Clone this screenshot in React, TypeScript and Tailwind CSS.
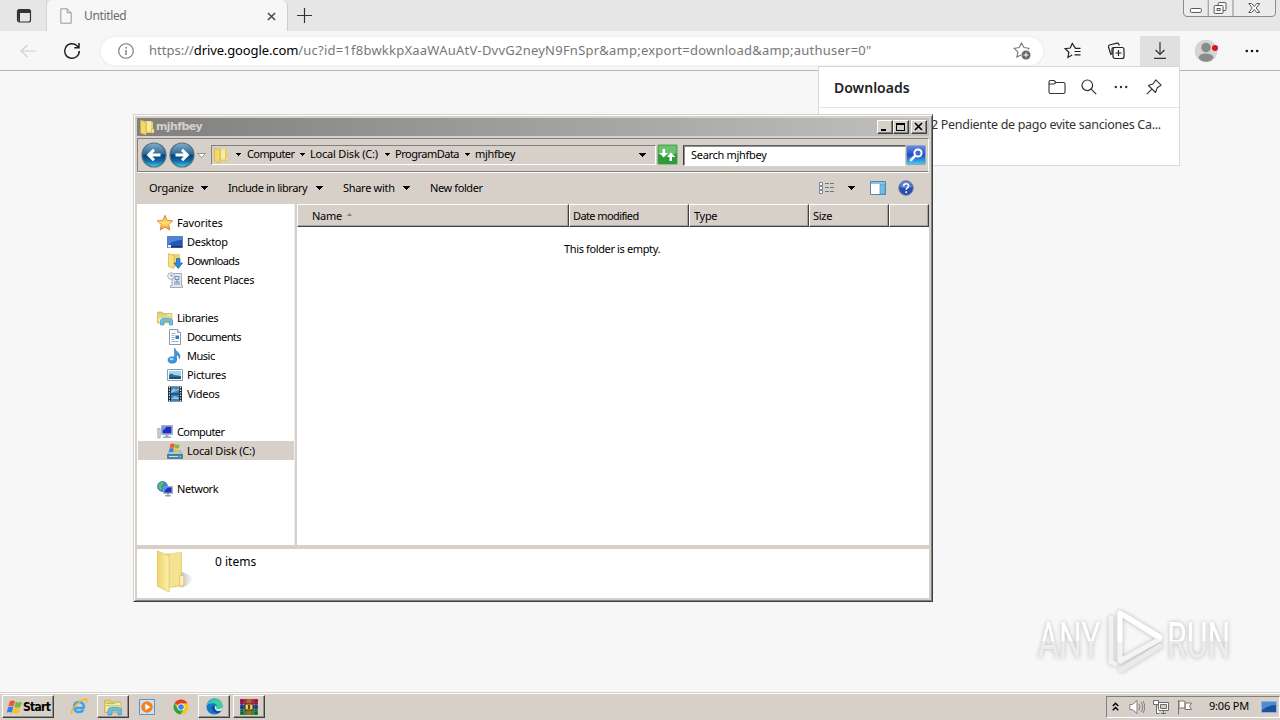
import type { ReactNode } from 'react';
import clsx from 'clsx';

type IconProps = { className?: string };

function Caret({ className }: IconProps) {
  return (
    <svg viewBox="0 0 7 4" className={clsx('h-1 w-[7px] shrink-0', className)} shapeRendering="crispEdges">
      <path d="M0 0h7L3.5 4z" fill="#000" />
    </svg>
  );
}

function SmallCaret({ className }: IconProps) {
  return (
    <svg viewBox="0 0 5 3" className={clsx('h-[3px] w-[5px] shrink-0', className)} shapeRendering="crispEdges">
      <path d="M0 0h5L2.5 3z" fill="#000" />
    </svg>
  );
}

function FolderIcon({ className = 'size-4' }: IconProps) {
  return (
    <svg viewBox="0 0 16 16" className={clsx('shrink-0', className)}>
      <path d="M6 2h6l2 1v11H6z" fill="#e9cf62" />
      <path d="M8 2.5h4v10H8z" fill="#f7eaa6" />
      <path d="M1.500 1l5.500 2v13l-5.500-2z" fill="#f5d968" stroke="#cfa936" strokeWidth=".6" />
      <path d="M13 10h2v4h-2z" fill="#fff6b8" stroke="#c9a73b" strokeWidth=".5" />
    </svg>
  );
}

function StarIcon() {
  return (
    <svg viewBox="0 0 16 16" className="size-4 shrink-0">
      <defs>
        <linearGradient id="star" x1="0" y1="0" x2="0" y2="1">
          <stop offset="0" stopColor="#ffab3d" />
          <stop offset=".55" stopColor="#ffe173" />
          <stop offset="1" stopColor="#f08a24" />
        </linearGradient>
      </defs>
      <path d="M8 .3l2.200 5 5.600.5-4.200 3.700 1.300 5.600L8 12.200l-4.900 2.900 1.300-5.600L.2 5.800l5.600-.5z" fill="url(#star)" stroke="#e07b1a" strokeWidth=".8" />
    </svg>
  );
}

function DesktopIcon() {
  return (
    <svg viewBox="0 0 16 16" className="size-4 shrink-0">
      <path d="M.5 2.500h15v11H.5z" fill="#2456b4" stroke="#5f7fae" />
      <path d="M1 3h14v3Q7 6 1 11z" fill="#4d86d6" />
      <path d="M1 12h14v1.500H1z" fill="#17306c" />
      <path d="M1 11h3v2.500H1z" fill="#e8f0ff" />
    </svg>
  );
}

function DownloadsIcon() {
  return (
    <svg viewBox="0 0 16 16" className="size-4 shrink-0">
      <path d="M5 1h8v13H5z" fill="#ecd469" />
      <path d="M1.500.5L7 2.500v13l-5.500-2z" fill="#f8e07a" stroke="#cda93a" strokeWidth=".6" />
      <path d="M9.500 5.500h3.500V10h2.500l-4.200 5.500L7 10h2.500z" fill="#2c8be0" stroke="#165fa9" strokeWidth=".7" />
    </svg>
  );
}

function RecentIcon() {
  return (
    <svg viewBox="0 0 16 16" className="size-4 shrink-0">
      <path d="M5 1.500h9.500v12h1v2h-12v-2H5z" fill="#e3e9ef" stroke="#8c98a6" strokeWidth=".8" />
      <path d="M8 4.500h4v3H8zM7 10h6M7 12h6M10 7.500v3" fill="none" stroke="#5f86b4" strokeWidth=".9" />
      <circle cx="4" cy="4" r="3.300" fill="#f4f7fa" stroke="#8f9baa" strokeWidth=".8" />
      <path d="M4 2v2.200h1.700" fill="none" stroke="#607083" strokeWidth=".8" />
    </svg>
  );
}

function LibrariesIcon({ className = 'size-4' }: IconProps) {
  return (
    <svg viewBox="0 0 16 16" className={clsx('shrink-0', className)}>
      <path d="M.5 2h5l1 1.500H15V13H.5z" fill="#edcf61" stroke="#cba83c" strokeWidth=".6" />
      <path d="M1.500 4.500h13V12h-13z" fill="#faeda8" />
      <path d="M2 5h8M2 7h12" stroke="#8fc06b" strokeWidth=".8" />
      <path d="M3.500 15V11q0-2.500 3-2.500h6q3 0 3 2.500v4h-3v-3.500H7V15z" fill="#72bde4" stroke="#3e8fbd" strokeWidth=".6" />
    </svg>
  );
}

function DocumentsIcon() {
  return (
    <svg viewBox="0 0 16 16" className="size-4 shrink-0">
      <path d="M2.500.5h8l3 3v12h-11z" fill="#fbfcfe" stroke="#7d8ea3" strokeWidth=".9" />
      <path d="M10.500.5v3h3" fill="#d7e0ea" stroke="#7d8ea3" strokeWidth=".8" />
      <path d="M4.500 4.500h4M4.500 6.500h3M4.500 8.500h3M4.500 10.500h3M4.500 12.500h7" stroke="#8a9bb2" strokeWidth=".8" />
      <path d="M8.500 6.500H12V10H8.500z" fill="#2f78bd" />
    </svg>
  );
}

function MusicIcon() {
  return (
    <svg viewBox="0 0 16 16" className="size-4 shrink-0">
      <path d="M7.500 0q1 2.500 3.500 4.500 3 2.500 1.500 6.500-.3-3.500-3-4.500v5.500h-2z" fill="#3c9be0" stroke="#1f6fb8" strokeWidth=".5" />
      <ellipse cx="5.300" cy="12" rx="4.300" ry="3.200" fill="#3596df" stroke="#1f6fb8" strokeWidth=".5" />
      <ellipse cx="4.600" cy="11" rx="2" ry="1.200" fill="#a6d6f7" />
    </svg>
  );
}

function PicturesIcon() {
  return (
    <svg viewBox="0 0 16 16" className="size-4 shrink-0">
      <path d="M.5 2.500h15v11H.5z" fill="#fff" stroke="#7fa3b5" />
      <path d="M2 4h12v8H2z" fill="#9fd7f0" />
      <path d="M2 8q2-3 5 0l7 1v3H2z" fill="#2a6f8c" />
      <path d="M2 10.500q6-1 12 0V12H2z" fill="#1b4c78" />
    </svg>
  );
}

function VideosIcon() {
  return (
    <svg viewBox="0 0 16 16" className="size-4 shrink-0">
      <path d="M1 .5h14v15H1z" fill="#1c2a3a" />
      <path d="M4 1h8v6.500H4zM4 8.500h8V15H4z" fill="#3c82bd" />
      <path d="M4 5l3-3 2 2 3-2v2L4 7zM4 13l4-3 4 2v1H4z" fill="#8ac4e8" />
      <path d="M2.500 1v14M13.500 1v14" stroke="#dfe7ee" strokeWidth="1.200" strokeDasharray="1.300 1.300" />
    </svg>
  );
}

function ComputerIcon() {
  return (
    <svg viewBox="0 0 16 16" className="size-4 shrink-0">
      <path d="M.8 4.500h2.400v9.500H.8z" fill="#d3d8de" stroke="#808a96" strokeWidth=".6" />
      <path d="M4.500 1.500h11v9h-11z" fill="#d9dde3" stroke="#8a93a0" strokeWidth=".7" />
      <path d="M5.500 2.500h9v7h-9z" fill="#1c2fc0" />
      <path d="M5.500 2.500h4q-1 3-4 4z" fill="#7b90f0" />
      <path d="M8.500 10.500h3v2H14v1.500H6v-1.500h2.500z" fill="#a1a9b4" />
    </svg>
  );
}

function DiskIcon() {
  return (
    <svg viewBox="0 0 16 16" className="size-4 shrink-0">
      <path d="M2.500 8h11l2 3.500H.5z" fill="#aacbdc" stroke="#5f8ba5" strokeWidth=".5" />
      <path d="M.5 11.500h15v4H.5z" fill="#3f87ad" stroke="#2e6484" strokeWidth=".6" />
      <path d="M2 13.500h9" stroke="#bfe0ee" />
      <path d="M12.500 13H14v1.200h-1.500z" fill="#7de35a" />
      <path d="M3.500 1q2.300-1.200 4.200 0l-.8 4Q5 4 2.700 5z" fill="#ee5a2a" />
      <path d="M8.300 1.300q2.300 1 4.400 0L11.900 5q-2.200.8-4.300 0z" fill="#7cbb3c" />
      <path d="M2.600 5.500q2.300-1 4.100 0L6 9.200q-2-.8-4.200 0z" fill="#3f7fd8" />
      <path d="M7.400 5.700q2.200 1 4.300 0l-.9 3.700q-2.100.8-4.100 0z" fill="#f5c22c" />
    </svg>
  );
}

function NetworkIcon() {
  return (
    <svg viewBox="0 0 16 16" className="size-4 shrink-0">
      <circle cx="5.500" cy="5.500" r="5" fill="#2f86d8" stroke="#2564a8" strokeWidth=".6" />
      <path d="M2 3q3-3 5-1.500L6 4 4 5l1 3-2 1Q.5 6 2 3z" fill="#5fc15b" />
      <path d="M6.500 5.500h9v7h-9z" fill="#dbe0e6" stroke="#7c8796" strokeWidth=".6" />
      <path d="M7.300 6.300h7.400v5.400H7.300z" fill="#1b33c4" />
      <path d="M7.300 6.300H11L7.300 10z" fill="#6f8bf0" />
      <path d="M10 12.500h2v1.500h2v1.500H8V14h2z" fill="#9aa4b1" />
    </svg>
  );
}

function NavArrow({ flip, className }: { flip?: boolean; className?: string }) {
  return (
    <svg viewBox="0 0 26 26" className={clsx('size-[26px] shrink-0', flip && '-scale-x-100', className)}>
      <defs>
        <linearGradient id="orb" x1="0" y1="0" x2="0" y2="1">
          <stop offset="0" stopColor="#86aec8" />
          <stop offset=".46" stopColor="#2a6b9b" />
          <stop offset=".5" stopColor="#08406f" />
          <stop offset=".75" stopColor="#0f6ba6" />
          <stop offset="1" stopColor="#49cdf5" />
        </linearGradient>
      </defs>
      <circle cx="13" cy="13" r="12" fill="url(#orb)" stroke="#50718a" strokeWidth="1.200" />
      <path d="M19.500 13H8.500M13 7.800L7.800 13l5.200 5.200" fill="none" stroke="#fff" strokeWidth="3" />
    </svg>
  );
}

type NavItem = { label: string; icon: ReactNode; root?: boolean; active?: boolean; tracking?: string };

const sidebar: (NavItem | null)[] = [
  { label: 'Favorites', icon: <StarIcon />, root: true, tracking: 'tracking-[-0.15px]' },
  { label: 'Desktop', icon: <DesktopIcon /> },
  { label: 'Downloads', icon: <DownloadsIcon />, tracking: 'tracking-[-0.6px]' },
  { label: 'Recent Places', icon: <RecentIcon />, tracking: 'tracking-[-0.25px]' },
  null,
  { label: 'Libraries', icon: <LibrariesIcon />, root: true, tracking: 'tracking-[-0.4px]' },
  { label: 'Documents', icon: <DocumentsIcon />, tracking: 'tracking-[-0.6px]' },
  { label: 'Music', icon: <MusicIcon />, tracking: 'tracking-[-0.5px]' },
  { label: 'Pictures', icon: <PicturesIcon /> },
  { label: 'Videos', icon: <VideosIcon /> },
  null,
  { label: 'Computer', icon: <ComputerIcon />, root: true, tracking: 'tracking-[-0.6px]' },
  { label: 'Local Disk (C:)', icon: <DiskIcon />, active: true, tracking: 'tracking-[-0.2px]' },
  null,
  { label: 'Network', icon: <NetworkIcon />, root: true, tracking: 'tracking-[-0.45px]' }
];

const crumbs = [
  { label: 'Computer', width: 'w-[53px] tracking-[-0.6px]' },
  { label: 'Local Disk (C:)', width: 'w-[75px] tracking-[-0.2px]' },
  { label: 'ProgramData', width: 'w-[70px] tracking-[-0.5px]' }
];

const commands = [
  { label: 'Organize', text: 'w-[52px]', cell: 'w-[79px]' },
  { label: 'Include in library', text: 'w-[88px] tracking-[-0.42px]', cell: 'w-[115px]' },
  { label: 'Share with', text: 'w-[60px]', cell: 'w-[87px]' }
];

const columns = [
  { label: 'Name', cell: 'w-[272px] pl-[14px]', sorted: true },
  { label: 'Date modified', cell: 'w-[120px] pl-[3px] tracking-[-0.6px]' },
  { label: 'Type', cell: 'w-[120px] pl-[4px]' },
  { label: 'Size', cell: 'w-[80px] pl-[3px]' },
  { label: '', cell: 'w-[40px]' }
];

function BrowserTabs() {
  return (
    <div className="flex h-[31px] bg-[#e6e6e6]">
      <div className="flex w-[47px] items-center border-r border-[#d4d4d4] pl-4">
        <svg viewBox="0 0 16 16" className="size-4">
          <rect x="1.500" y="1.500" width="13" height="12.500" rx="2" fill="none" stroke="#333" strokeWidth="1.200" />
          <path d="M1.500 2.500q0-1 1.500-1h10q1.500 0 1.500 1V5h-13zM1.500 5H4v9H2.500z" fill="#333" />
        </svg>
      </div>
      <div className="flex w-[241px] items-center rounded-t-md border-r border-[#cdcdcd] bg-[#f7f7f7] pl-3">
        <svg viewBox="0 0 12 16" className="h-4 w-[14px]" fill="none" stroke="#999">
          <path d="M.8.8h6.400l4 4v10.400H.8zM7.200.8v4h4" />
        </svg>
        <span className="ml-[11px] w-[183px] text-[12px] tracking-[-0.35px] text-[#6b6b6b]">Untitled</span>
        <svg viewBox="0 0 10 10" className="mt-px size-[9px]" stroke="#444" strokeWidth="1.600">
          <path d="M1 1l8 8M9 1L1 9" />
        </svg>
      </div>
      <svg viewBox="0 0 14 14" className="mt-[8px] ml-[9px] size-[15px]" stroke="#333" strokeWidth="1.100">
        <path d="M7 0v14M0 7h14" />
      </svg>
      <div className="mt-[-1px] mr-1 ml-auto flex h-[18px] w-[93px] rounded-b border border-[#8c8c8c] bg-[#ececec]">
        <svg viewBox="0 0 92 16" className="h-4 w-[92px]" fill="none" stroke="#555">
          <path d="M24.500 0v16M49.500 0v16" stroke="#8c8c8c" />
          <rect x="6.500" y="8.500" width="11" height="4" rx="1" fill="#fff" />
          <rect x="34.500" y="2.500" width="8" height="8" rx="1" fill="#fff" />
          <rect x="30.500" y="5.500" width="9" height="8" rx="1" fill="#fff" />
          <rect x="33.500" y="8.500" width="3" height="2" />
          <path d="M65.500 3.500h3l2.500 3 2.500-3h3L73 8l3.500 4.500h-3l-2.500-3-2.500 3h-3L69 8z" fill="#fff" />
        </svg>
      </div>
    </div>
  );
}

function BrowserToolbar() {
  return (
    <div className="flex h-10 items-center border-b border-[#b5b5b5] bg-[#f7f7f7] pl-5">
      <svg viewBox="0 0 16 14" className="h-[14px] w-4" fill="none" stroke="#cfcfcf" strokeWidth="1.200">
        <path d="M16 7H1M7.500 1L1 7l6.500 6" />
      </svg>
      <svg viewBox="0 0 18 18" className="ml-[27px] size-[18px]" fill="none" stroke="#222" strokeWidth="1.500">
        <path d="M16.300 9A7.300 7.300 0 1 1 14 3.700L15.800 5.500M16 1v4.700h-4.700" />
      </svg>
      <div className="ml-[18px] flex h-[32px] w-[946px] shrink-0 items-center rounded-full border-2 border-[#f1f1f1] bg-white pl-[17px]">
        <svg viewBox="0 0 16 16" className="size-4 shrink-0" fill="none" stroke="#777" strokeWidth="1.100">
          <circle cx="8" cy="8" r="7.300" />
          <path d="M8 7v5M8 4v1.500" strokeWidth="1.400" />
        </svg>
        <span className="mt-px ml-[15px] w-[860px] text-[13px] tracking-[0.235px] whitespace-nowrap text-[#777]">
          <span className="tracking-normal">https://</span>
          <span className="tracking-[-0.12px] text-black">drive.google.com</span>
          /uc?id=1f8bwkkpXaaWAuAtV-DvvG2neyN9FnSpr&amp;amp;export=download&amp;amp;authuser=0"
        </span>
        <svg viewBox="0 0 18 18" className="ml-auto mr-[12px] size-[18px] shrink-0" fill="none" stroke="#777">
          <path d="M15 7.500l1-1.200-5-.7L8.500 1 6.200 5.600l-5 .7 3.700 3.600-1 5 4-2" strokeWidth="1.100" />
          <circle cx="13" cy="13" r="4.500" fill="#666" stroke="none" />
          <path d="M13 10.500v5M10.500 13h5" stroke="#fff" />
        </svg>
      </div>
      <svg viewBox="0 0 18 18" className="ml-[19px] size-[18px] shrink-0" fill="none" stroke="#222" strokeWidth="1.200">
        <path d="M16.500 6.300h-5L8.300 1.500 6.200 6l-5 .7 3.700 3.500-1 5.200 4.300-2.400M10.500 9.500h6M10.500 12.800h6" />
      </svg>
      <svg viewBox="0 0 18 18" className="ml-[25px] size-[18px] shrink-0" fill="none" stroke="#222" strokeWidth="1.200">
        <path d="M4 13L1.500 5q-.4-1.500 1-2L10 1.200q1.300-.3 1.800 1l.4 1.300M5 12.500V7q0-1.500 1.500-1.500H9" />
        <rect x="6" y="5.500" width="11" height="11" rx="2" />
        <path d="M11.500 8v6M8.500 11h6" />
      </svg>
      <div className="mt-px ml-[15px] flex h-[31px] w-10 shrink-0 items-center justify-center bg-[#e0e0e0]">
        <svg viewBox="0 0 14 18" className="h-[18px] w-[14px]" fill="none" stroke="#333" strokeWidth="1.200">
          <path d="M7 0v12.500M2.500 8L7 12.500 11.500 8M1 16.400h12" />
        </svg>
      </div>
      <svg viewBox="0 0 24 24" className="ml-[14px] size-6 shrink-0">
        <circle cx="12" cy="12" r="11.300" fill="#d4d4d4" />
        <circle cx="12" cy="8.500" r="4.800" fill="#8b8b8b" />
        <path d="M4.500 18.500q1-4 7.500-4t7.500 4Q17 22.800 12 22.800t-7.500-4.300z" fill="#8b8b8b" />
        <circle cx="21" cy="9" r="3" fill="#e3101d" />
      </svg>
      <svg viewBox="0 0 14 4" className="ml-[27px] h-1 w-[14px] shrink-0" fill="#111">
        <circle cx="1.800" cy="2" r="1.300" />
        <circle cx="7" cy="2" r="1.300" />
        <circle cx="12.200" cy="2" r="1.300" />
      </svg>
    </div>
  );
}

function DownloadsFlyout() {
  return (
    <div className="absolute top-[66px] left-[818px] h-[100px] w-[362px] border border-[#d8d8d8] bg-white">
      <div className="flex h-[41px] items-center border-b border-[#e4e4e4] pl-[15px]">
        <span className="w-[214px] text-[14px] font-semibold text-[#222]">Downloads</span>
        <svg viewBox="0 0 18 16" className="h-4 w-[18px]" fill="none" stroke="#333" strokeWidth="1.100">
          <path d="M1 4.500V3q0-1.500 1.500-1.500H6l2 2h7.500Q17 3.500 17 5v8q0 1.500-1.500 1.500h-13Q1 14.500 1 13V5h5l2-1.500" />
        </svg>
        <svg viewBox="0 0 16 16" className="ml-[15px] size-4" fill="none" stroke="#333" strokeWidth="1.200">
          <circle cx="6.300" cy="6.300" r="5.300" />
          <path d="M10.200 10.200l5 5" />
        </svg>
        <svg viewBox="0 0 14 4" className="ml-[17px] h-1 w-[14px]" fill="#333">
          <circle cx="1.800" cy="2" r="1.200" />
          <circle cx="7" cy="2" r="1.200" />
          <circle cx="12.200" cy="2" r="1.200" />
        </svg>
        <svg viewBox="0 0 16 16" className="ml-[18px] size-4" fill="none" stroke="#333" strokeWidth="1.100">
          <path d="M9.800.9l5.300 5.300-3.900 2.600-1.700 4.700-7-7 4.700-1.700zM5.700 10.300L.8 15.200" strokeLinejoin="round" />
        </svg>
      </div>
      <div className="flex justify-end pt-[7px] pr-[18px] text-[12.5px] leading-5 tracking-[-0.3px] text-[#333]">
        <span className="w-[230px] whitespace-nowrap">2 Pendiente de pago evite sanciones Ca...</span>
      </div>
    </div>
  );
}

function TitleButton({ children, className }: { children: ReactNode; className?: string }) {
  return (
    <div
      className={clsx(
        'flex h-[14px] w-4 items-center justify-center border border-t-white border-r-[#404040] border-b-[#404040] border-l-white bg-[#d6d0c8] shadow-[inset_-1px_-1px_0_#808080]',
        className
      )}
    >
      <svg viewBox="0 0 10 10" className="size-[10px]" fill="none" stroke="#000" shapeRendering="crispEdges">
        {children}
      </svg>
    </div>
  );
}

function AddressRow() {
  return (
    <div className="mt-[2px] flex h-[34px] items-center border border-t-[#808080] border-r-white border-b-[#808080] border-l-[#808080] pl-[3px] shadow-[0_1px_0_#fff]">
      <NavArrow />
      <NavArrow flip className="ml-[2px]" />
      <svg viewBox="0 0 9 5" className="ml-[2px] h-[5px] w-[9px] shrink-0">
        <path d="M.5.5h8l-4 4z" fill="#fff" stroke="#808080" strokeWidth=".8" />
      </svg>
      <div className="-mt-px ml-[5px] flex h-5 w-[445px] shrink-0 items-center border border-t-[#808080] border-r-white border-b-white border-l-[#808080] pl-px">
        <FolderIcon />
        <SmallCaret className="ml-[7px]" />
        <div className="ml-[6px] flex w-[402px] items-center">
          {crumbs.map((crumb) => (
            <div key={crumb.label} className="flex items-center">
              <span className={clsx('whitespace-nowrap', crumb.width)}>{crumb.label}</span>
              <SmallCaret className="mr-[5px]" />
            </div>
          ))}
          <span>mjhfbey</span>
        </div>
        <Caret className="-ml-[10px]" />
      </div>
      <svg viewBox="0 0 22 22" className="ml-px size-[22px] shrink-0">
        <rect x=".5" y=".5" width="20" height="20" rx="1.500" fill="#2f9b38" stroke="#9ab89b" />
        <path d="M1.500 1.500h18v8q-9 2-18 1z" fill="#6cc36f" />
        <path d="M5.500 5h2.500v4h3l-4.300 4.500L2.500 9h3zM12.500 17v-4H9.800L14 8.500l4.500 4.500H15v4z" fill="#fff" />
      </svg>
      <div className="ml-1 flex h-[21px] w-[223px] shrink-0 items-center border border-t-[#606060] border-r-[#d6d0c8] border-b-white border-l-[#404040] bg-white pl-[7px] shadow-[inset_1px_1px_0_#909090]">
        Search mjhfbey
      </div>
      <svg viewBox="0 0 20 20" className="size-5 shrink-0">
        <defs>
          <linearGradient id="find" x1="0" y1="0" x2="0" y2="1">
            <stop offset="0" stopColor="#6e90e4" />
            <stop offset=".5" stopColor="#1f4ac4" />
            <stop offset="1" stopColor="#45d0f4" />
          </linearGradient>
        </defs>
        <rect x=".5" y=".5" width="19" height="19" rx="1" fill="url(#find)" stroke="#8fa8bf" />
        <circle cx="12" cy="8" r="3.600" fill="#3e6ad2" stroke="#fff" strokeWidth="2" />
        <path d="M9.300 10.700L5 15" stroke="#fff" strokeWidth="2.600" strokeLinecap="round" />
      </svg>
    </div>
  );
}

function CommandBar() {
  return (
    <div className="flex h-8 items-center pl-3">
      {commands.map((command) => (
        <div key={command.label} className={clsx('flex items-center', command.cell)}>
          <span className={clsx('whitespace-nowrap', command.text)}>{command.label}</span>
          <Caret />
        </div>
      ))}
      <span className="w-[389px] tracking-[-0.4px]">New folder</span>
      <svg viewBox="0 0 16 14" className="h-[14px] w-4 shrink-0" fill="none" stroke="#7385a3">
        <path d="M.5 1.500h3v3h-3zM.5 5.500h3v3h-3zM.5 9.500h3v3h-3z" fill="#fff" />
        <path d="M6 2.500h9M6 6.500h9M6 10.500h9" stroke="#6c7686" strokeDasharray="4 1" />
      </svg>
      <Caret className="ml-[13px]" />
      <svg viewBox="0 0 16 14" className="ml-[15px] h-[14px] w-4 shrink-0">
        <path d="M.5.5h15v13H.5z" fill="#fff" stroke="#5685ac" />
        <path d="M1 1h14v2H1z" fill="#8fc0e0" />
        <path d="M10 3.500h5V13h-5z" fill="#71bde0" stroke="#4c93bd" strokeWidth=".7" />
      </svg>
      <svg viewBox="0 0 16 16" className="ml-3 size-4 shrink-0">
        <circle cx="8" cy="8" r="7.400" fill="#2c4fae" stroke="#8793b5" />
        <path d="M2 7a6 6 0 0 1 12 0q-6 2-12 0z" fill="#5f82d4" />
        <path d="M5.600 6.300q0-2.600 2.500-2.600t2.400 2.200q0 1.200-1.200 1.900Q8.200 8.500 8.200 9.800M8.200 11.300v1.600" fill="none" stroke="#fff" strokeWidth="1.600" />
      </svg>
    </div>
  );
}

function ExplorerWindow() {
  return (
    <div className="absolute top-[114px] left-[133px] flex h-[488px] w-[800px] flex-col border border-t-[#d6d0c8] border-r-[#404040] border-b-[#404040] border-l-[#d6d0c8] bg-[#d6d0c8] p-[3px] text-[11px] tracking-[-0.3px] text-black shadow-[inset_1px_1px_0_#fff,inset_-1px_-1px_0_#808080]">
      <div className="flex h-[18px] items-center bg-linear-to-r from-[#808080] to-[#c0c0c0] pr-[2px] pl-[2px]">
        <FolderIcon />
        <span className="mt-px ml-px font-['DejaVu_Sans',sans-serif] text-[11px] font-bold tracking-[-0.6px] text-[#d6d0c8]">mjhfbey</span>
        <TitleButton className="ml-auto">
          <path d="M1 7h5v2H1z" fill="#000" stroke="none" />
        </TitleButton>
        <TitleButton>
          <path d="M.5 1h8v7.500h-8zM.5 2h8" />
        </TitleButton>
        <TitleButton className="ml-[2px]">
          <path d="M1 1l7 7M8 1L1 8" strokeWidth="1.600" shapeRendering="auto" />
        </TitleButton>
      </div>
      <AddressRow />
      <CommandBar />

      <div className="flex h-[341px]">
        <div className="w-[158px] border-r border-[#eee] bg-white pt-[9px] pl-px">
          {sidebar.map((item, i) =>
            item ? (
              <div
                key={item.label}
                className={clsx('flex h-[19px] items-center gap-1', item.root ? 'pl-[19px]' : 'pl-[29px]', item.active && 'bg-[#d6d0c8]')}
              >
                {item.icon}
                <span className={clsx('mt-[2px] whitespace-nowrap', item.tracking)}>{item.label}</span>
              </div>
            ) : (
              <div key={i} className="h-[19px]" />
            )
          )}
        </div>
        <div className="ml-[2px] flex-1 bg-white">
          <div className="flex h-[23px]">
            {columns.map((column) => (
              <div
                key={column.cell}
                className={clsx(
                  'flex items-center border border-t-white border-r-[#404040] border-b-[#404040] border-l-white bg-[#d6d0c8] pt-[2px] shadow-[inset_-1px_-1px_0_#a8a49c]',
                  column.cell
                )}
              >
                {column.label}
                {column.sorted && (
                  <svg viewBox="0 0 5 3" className="mb-[4px] ml-[5px] h-[3px] w-[5px]">
                    <path d="M0 3h5L2.500 0z" fill="#85817b" />
                  </svg>
                )}
              </div>
            ))}
          </div>
          <p className="pt-[14px] pl-[267px] tracking-[-0.37px]">This folder is empty.</p>
        </div>
      </div>

      <div className="mt-1 flex h-[49px] bg-white">
        <svg viewBox="0 0 40 44" className="mt-[1px] ml-[18px] h-[43px] w-10">
          <defs>
            <linearGradient id="flap" x1="0" x2="1">
              <stop offset="0" stopColor="#efd56d" />
              <stop offset="1" stopColor="#fbf0ad" />
            </linearGradient>
            <linearGradient id="shade" x1="0" x2="1">
              <stop offset="0" stopColor="#c4c4c4" />
              <stop offset="1" stopColor="#fff" />
            </linearGradient>
          </defs>
          <path d="M26 22q8 2 13 7-4 7-12 10z" fill="url(#shade)" />
          <path d="M10 4l17-2v35l-15 2z" fill="#e8cc62" />
          <path d="M14 4l12-1.500v33L14 38z" fill="#f4e393" />
          <path d="M2 1l12 5v37L2 37z" fill="url(#flap)" stroke="#ddbf57" strokeWidth=".7" />
          <path d="M25 26h4v9l-4 3z" fill="#fff4bd" stroke="#d0b14b" strokeWidth=".6" />
        </svg>
        <span className="mt-1 ml-[20px] text-[12px] tracking-normal">0 items</span>
      </div>
    </div>
  );
}

function WatermarkWord({ children }: { children: string }) {
  return (
    <div className="w-[66px] shrink-0">
      <span className="inline-block origin-left scale-x-[.64] bg-linear-to-b from-white from-50% to-[#ececec] to-50% bg-clip-text text-transparent">
        {children}
      </span>
    </div>
  );
}

function Watermark() {
  return (
    <div className="absolute top-[606px] left-[1038px] flex h-[70px] w-[200px] items-center font-['Roboto',sans-serif] text-[50px] leading-[70px] drop-shadow-[0_0_2px_#b8b8b8]">
      <WatermarkWord>ANY</WatermarkWord>
      <svg viewBox="0 0 60 66" className="h-[66px] w-[60px] shrink-0" fill="none" strokeLinejoin="round" strokeLinecap="round" strokeWidth="5">
        <path d="M7 10v44l4 2" stroke="#f1f1f1" />
        <path d="M17 62l39-24" stroke="#eaeaea" />
        <path d="M16 5v48l40-22z" stroke="#f4f4f4" />
        <path d="M16 32V5l40 24" stroke="#fff" />
      </svg>
      <div className="ml-[3px]">
        <WatermarkWord>RUN</WatermarkWord>
      </div>
    </div>
  );
}

function TaskButton({ children, className }: { children: ReactNode; className?: string }) {
  return (
    <div
      className={clsx(
        'flex h-[23px] w-8 shrink-0 items-center justify-center border border-t-white border-r-[#404040] border-b-[#404040] border-l-white shadow-[inset_-1px_-1px_0_#909090]',
        className
      )}
    >
      {children}
    </div>
  );
}

function Taskbar() {
  return (
    <div className="flex h-7 items-center border-t border-[#d6d0c8] bg-[#d6d0c8] pl-[2px] text-[11px] text-black shadow-[inset_0_1px_0_#fff]">
      <TaskButton className="w-[52px]">
        <svg viewBox="0 0 18 16" className="h-4 w-[17px] shrink-0">
          <path d="M4 2q3-2 5.500 0L8 7.500Q5 6 2.500 7.500z" fill="#ee5b2b" />
          <path d="M10.300 2.500q3 1.500 6.500 0L15.300 8q-3 1.500-6.300 0z" fill="#7bb83a" />
          <path d="M2.200 8.300q3-1.500 5.500 0L6.200 14q-3-1.500-5.500 0z" fill="#3c7fd9" />
          <path d="M8.600 8.800q3 1.500 6.400 0l-1.500 5.500q-3 1.500-6.400 0z" fill="#f6c22a" />
        </svg>
        <span className="font-['DejaVu_Sans_Condensed','DejaVu_Sans',sans-serif] text-[12px] font-bold tracking-[-0.7px]">Start</span>
      </TaskButton>
      <svg viewBox="0 0 18 18" className="ml-[16px] size-[18px]" fill="none">
        <path d="M14.700 10H4.300Q4.500 14 9 14q3 0 4.300-2" stroke="#3aa4e6" strokeWidth="2.600" />
        <path d="M4 9q.5-5 5-5t5 5.500" stroke="#3aa4e6" strokeWidth="2.600" />
        <path d="M2 16q-2-2 3-8T16 1q2 1 0 4" stroke="#f3b72b" strokeWidth="1.400" />
      </svg>
      <TaskButton className="ml-[9px]">
        <LibrariesIcon className="size-[18px]" />
      </TaskButton>
      <svg viewBox="0 0 16 16" className="ml-[10px] size-4">
        <path d="M.5.5h15v15H.5z" fill="#cfe2f2" stroke="#5d93c2" />
        <circle cx="8" cy="8" r="5.800" fill="#f58220" />
        <path d="M6.300 4.800L11.500 8l-5.200 3.200z" fill="#fff" />
      </svg>
      <svg viewBox="0 0 16 16" className="ml-[18px] size-4">
        <circle cx="8" cy="8" r="7.500" fill="#fbc618" />
        <path d="M8 8L1.500 4.300A7.500 7.500 0 0 1 14.500 4.300L8 4.500z" fill="#e33b2e" />
        <path d="M1.500 4.300A7.500 7.500 0 0 0 7.500 15.500L11 9.800 8 8 5 9.800z" fill="#2da24c" />
        <circle cx="8" cy="8" r="3.600" fill="#fff" />
        <circle cx="8" cy="8" r="2.800" fill="#3f7fea" />
      </svg>
      <TaskButton className="ml-[9px]">
        <svg viewBox="0 0 16 16" className="size-[17px]">
          <circle cx="8" cy="8" r="7.600" fill="#1677c8" />
          <path d="M.6 7Q2 .4 8.500.4q6.500.3 7 6.600 0 3.500-3.600 3.500-2.600 0-2-1.500Q11 6 7.500 5 3 4.500.6 7z" fill="#3fcf9c" />
          <path d="M.6 7Q2 .4 8.500.4 12 .6 14 3.300 7-.5.6 7z" fill="#30b4dc" />
          <path d="M5.600 9q0 4.500 4.600 5 3 .2 4.300-2-4 1.500-5.800-.5Q7.300 10 8.300 7.500 6 7 5.600 9z" fill="#0d4a96" />
          <path d="M9.900 9q-.6 1.500 2 1.500 2.500 0 3.500-1.700l-.7 3q-5 1.500-6.300-1.600Q8 8.500 8.600 7.300q1.500.2 1.300 1.700z" fill="#e3e9e8" />
        </svg>
      </TaskButton>
      <TaskButton className="ml-[3px]">
        <svg viewBox="0 0 18 16" className="h-4 w-[18px]">
          <path d="M0 0h18v5H0z" fill="#b0254e" />
          <path d="M0 5.500h18v5H0z" fill="#2b4fa8" />
          <path d="M0 11h18v5H0z" fill="#2c8a3d" />
          <path d="M6.500 0h5v16h-5z" fill="#a4692a" />
          <path d="M5 5h8v6H5z" fill="#e8c95d" stroke="#47310f" />
          <path d="M8 6h2v4H8z" fill="#5c3f14" />
          <path d="M2 1v14M16 1v14" stroke="#191919" strokeDasharray="2 1" />
        </svg>
      </TaskButton>
      <div className="ml-auto flex h-[22px] w-[174px] items-center border border-t-[#808080] border-r-white border-b-white border-l-[#808080] pl-[5px]">
        <svg viewBox="0 0 7 9" className="h-[9px] w-[7px] shrink-0" fill="none" stroke="#000" strokeWidth="1.500">
          <path d="M.8 4L3.500 1.300 6.200 4M.8 8.200l2.700-2.700 2.700 2.700" />
        </svg>
        <svg viewBox="0 0 16 16" className="ml-[10px] size-4 shrink-0" fill="none" stroke="#808080">
          <path d="M.8 5.500h2.700L8 1.500v13l-4.500-4H.8z" fill="#fff" />
          <path d="M10 5q2 3 0 6M12 3q3.500 5 0 10M14 2q3.500 6 0 12" />
        </svg>
        <svg viewBox="0 0 16 16" className="ml-[8px] size-4 shrink-0" fill="#fff" stroke="#6b6b6b">
          <path d="M5.500 3.500h10v8h-10z" />
          <path d="M7.500 5.500h6v4h-6z" fill="#d6d0c8" />
          <path d="M8 14.500h5M10.500 12v2.500" />
          <path d="M.5 1.500h5v4h-5zM3.500 5.500v9h3" />
        </svg>
        <svg viewBox="0 0 16 16" className="ml-[8px] size-4 shrink-0" fill="#fff" stroke="#777">
          <path d="M1.500 1v14.500M2 2.500q3-1.500 6 0v7q-3-1.500-6 0zM8 4h6.500l-2 3 2 3.500H8z" />
        </svg>
        <span className="ml-[16px] w-[52px] tracking-[-0.2px] whitespace-nowrap">9:06 PM</span>
        <svg viewBox="0 0 16 14" className="h-[14px] w-4 shrink-0">
          <path d="M.5 1.500h15v11H.5z" fill="#1d4f9c" stroke="#8fb3df" />
          <path d="M1 2h14v3Q7 5 1 10z" fill="#4a8bd8" />
        </svg>
      </div>
    </div>
  );
}

export default function App() {
  return (
    <div className="relative flex h-[720px] w-[1280px] flex-col overflow-hidden bg-[#f7f7f7] font-['Noto_Sans',sans-serif]">
      <BrowserTabs />
      <BrowserToolbar />
      <main className="flex-1" />
      <Taskbar />
      <DownloadsFlyout />
      <ExplorerWindow />
      <Watermark />
    </div>
  );
}
